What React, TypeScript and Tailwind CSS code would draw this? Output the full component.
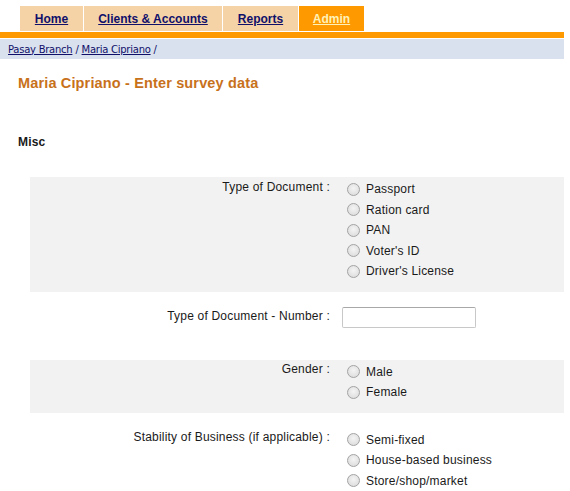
import React, { useState } from "react";

const TABS = [
  { label: "Home", width: "w-[64px]" },
  { label: "Clients & Accounts", width: "w-[139px]" },
  { label: "Reports", width: "w-[76px]" },
  { label: "Admin", width: "w-[66px]", active: true },
];

function Radio({ label, checked, onChange }: { label: string; checked: boolean; onChange: () => void }) {
  return (
    <label className="flex h-[20.5px] cursor-pointer items-center">
      <input type="radio" className="sr-only" checked={checked} onChange={onChange} />
      <span className="mr-[6px] flex h-[13px] w-[13px] items-center justify-center rounded-full border border-[#a3a3a3] bg-[radial-gradient(circle_at_50%_40%,#f4f4f4,#d8d8d8)]">
        {checked && <span className="h-[5px] w-[5px] rounded-full bg-[#333]" />}
      </span>
      <span>{label}</span>
    </label>
  );
}

function RadioGroup({ options }: { options: string[] }) {
  const [value, setValue] = useState<string | null>(null);
  return (
    <div className="flex flex-col">
      {options.map((o) => (
        <Radio key={o} label={o} checked={value === o} onChange={() => setValue(o)} />
      ))}
    </div>
  );
}

export default function App() {
  return (
    <div className="min-h-[491px] w-[570px] bg-white font-['Liberation_Sans',Arial,sans-serif] text-[12px] tracking-[0.2px] text-[#1a1a1a]">
      <div className="flex h-[32px] items-end pl-[20px] tracking-normal">
        {TABS.map((t) => (
          <div
            key={t.label}
            className={[
              "mb-[1px] flex h-[25px] items-center justify-center border-r border-white font-bold",
              t.width,
              t.active ? "bg-[#ff9900] text-[#fff2b8]" : "bg-[#f5d3a7] text-[#10106a]",
            ].join(" ")}
          >
            <a href="#" className="underline">
              {t.label}
            </a>
          </div>
        ))}
      </div>
      <div className="h-[6px] w-[564px] bg-[#ff9900]" />
      <div className="h-[1px]" />
      <div className="flex h-[20px] w-[564px] items-center bg-[#d9e0ee] pl-[8px] font-['DejaVu_Sans',sans-serif] text-[10px] tracking-[-0.25px] text-[#10106a]">
        <a href="#" className="underline">Pasay Branch</a>
        <span className="mx-[3px]">/</span>
        <a href="#" className="underline">Maria Cipriano</a>
        <span className="ml-[3px]">/</span>
      </div>

      <h1 className="mt-[15px] pl-[18px] text-[14.5px] leading-[18px] font-bold tracking-[0.15px] text-[#c8711b]">
        Maria Cipriano - Enter survey data
      </h1>
      <h2 className="mt-[42px] pl-[18px] text-[12px] leading-[16px] font-bold">Misc</h2>

      <div className="mt-[27px] w-[564px] pl-[30px]">
        <div className="flex bg-[#f2f2f2] pt-[2px] pb-[10px]">
          <div className="-mt-[1px] w-[303px] pr-[3px] text-right">Type of Document :</div>
          <div className="pl-[14px]">
            <RadioGroup options={["Passport", "Ration card", "PAN", "Voter's ID", "Driver's License"]} />
          </div>
        </div>

        <div className="flex h-[68px] items-start pt-[15px]">
          <div className="w-[303px] pr-[3px] text-right">Type of Document - Number :</div>
          <div className="pl-[9px]">
            <input
              type="text"
              className="h-[21px] w-[134px] rounded-[2px] border border-[#c8c8c8] border-t-[#a8a8a8] bg-white px-1 outline-none"
            />
          </div>
        </div>

        <div className="flex bg-[#f2f2f2] pt-[2px] pb-[10px]">
          <div className="-mt-[2px] w-[303px] pr-[3px] text-right">Gender :</div>
          <div className="pl-[14px]">
            <RadioGroup options={["Male", "Female"]} />
          </div>
        </div>

        <div className="flex pt-[17px]">
          <div className="-mt-[2px] w-[303px] pr-[3px] text-right">Stability of Business (if applicable) :</div>
          <div className="pl-[14px]">
            <RadioGroup options={["Semi-fixed", "House-based business", "Store/shop/market"]} />
          </div>
        </div>
      </div>
    </div>
  );
}
